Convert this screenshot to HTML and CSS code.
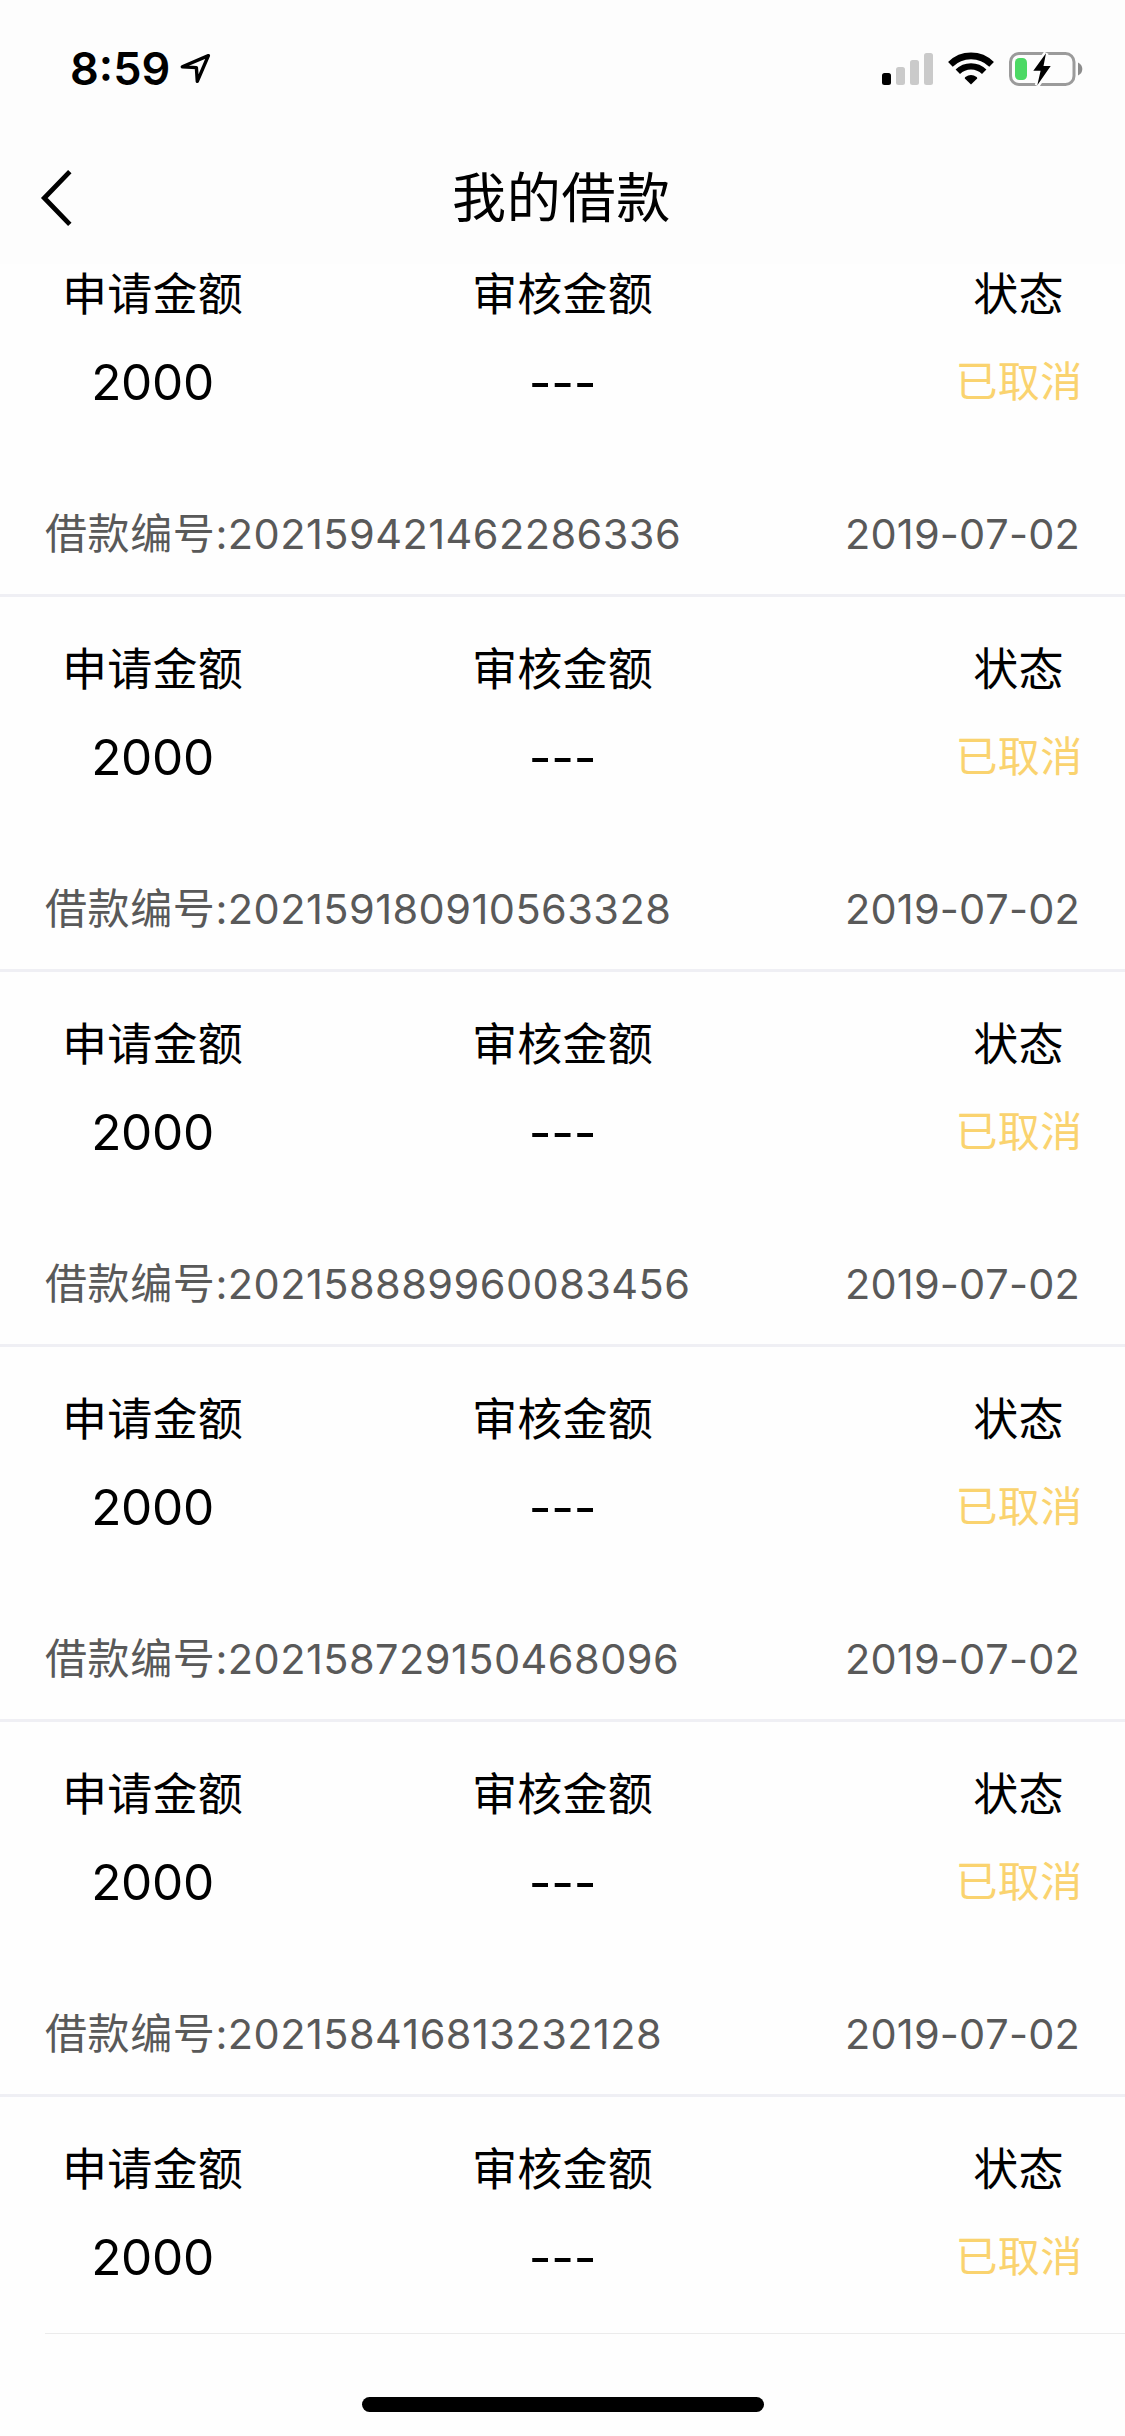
FILE: index.html
```html
<!DOCTYPE html>
<html lang="zh-CN">
<head>
<meta charset="utf-8">
<title>我的借款</title>
<link rel="stylesheet" href="styles.css">
</head>
<body>
<div class="screen">
  <header class="header">
    <div class="status-bar">
      <div class="clock">
        <span class="time">8:59</span>
        <svg class="location" width="34" height="34" viewBox="178 52 34 34"><path d="M208.4 55.6L182.3 66.8L196.4 67.6L197.3 81.4Z" fill="none" stroke="#000" stroke-width="3.4" stroke-linejoin="round"/></svg>
      </div>
      <svg class="indicators" width="204" height="40" viewBox="880 49 204 40">
        <rect x="882" y="73" width="9" height="12" rx="2.5"/>
        <g fill="#cacaca"><rect x="896" y="67" width="9" height="18" rx="2.5"/><rect x="910" y="60" width="9" height="25" rx="2.5"/><rect x="924" y="53" width="9" height="32" rx="2.5"/></g>
        <g fill="none" stroke="#000"><path d="M950.4 64.4A29.2 29.2 0 0 1 991.6 64.4" stroke-width="6.6"/><path d="M957.8 71.8A18.6 18.6 0 0 1 984.2 71.8" stroke-width="6.2"/></g>
        <path d="M971 84.6L964.8 78.4Q964.6 77.6 965.4 77Q971 73.2 976.6 77Q977.4 77.6 977.2 78.4Z"/>
        <rect x="1010.5" y="53.5" width="63.5" height="31" rx="8.5" fill="none" stroke="#9b9b9b" stroke-width="3"/>
        <path d="M1078 62.5Q1082.3 64.5 1082.3 69Q1082.3 73.5 1078 75.5Z" fill="#8c8c8c"/>
        <rect x="1015" y="58" width="12" height="22" rx="4.5" fill="#4cd964"/>
        <path d="M1046 53.3L1033.3 70.7H1040.6L1037.3 85.3L1050.7 66H1043.5Z" stroke="#fdfdfd" stroke-width="5" paint-order="stroke"/>
      </svg>
    </div>
    <div class="nav">
      <svg class="back" width="34" height="60" viewBox="40 168 34 60"><path d="M69.8 171.7L44.3 198L69.8 224.3" fill="none" stroke="#000" stroke-width="4.8"/></svg>
      <h1 class="title">我的借款</h1>
    </div>
  </header>
  <main class="list">
    <section class="loan loan-first">
      <div class="labels"><span>申请金额</span><span>审核金额</span><span>状态</span></div>
      <div class="values"><span>2000</span><span>---</span><span class="status">已取消</span></div>
      <div class="meta"><span class="number">借款编号<span class="digits">:202159421462286336</span></span><span class="digits date">2019-07-02</span></div>
    </section>
    <section class="loan">
      <div class="labels"><span>申请金额</span><span>审核金额</span><span>状态</span></div>
      <div class="values"><span>2000</span><span>---</span><span class="status">已取消</span></div>
      <div class="meta"><span class="number">借款编号<span class="digits">:202159180910563328</span></span><span class="digits date">2019-07-02</span></div>
    </section>
    <section class="loan">
      <div class="labels"><span>申请金额</span><span>审核金额</span><span>状态</span></div>
      <div class="values"><span>2000</span><span>---</span><span class="status">已取消</span></div>
      <div class="meta"><span class="number">借款编号<span class="digits">:202158889960083456</span></span><span class="digits date">2019-07-02</span></div>
    </section>
    <section class="loan">
      <div class="labels"><span>申请金额</span><span>审核金额</span><span>状态</span></div>
      <div class="values"><span>2000</span><span>---</span><span class="status">已取消</span></div>
      <div class="meta"><span class="number">借款编号<span class="digits">:202158729150468096</span></span><span class="digits date">2019-07-02</span></div>
    </section>
    <section class="loan">
      <div class="labels"><span>申请金额</span><span>审核金额</span><span>状态</span></div>
      <div class="values"><span>2000</span><span>---</span><span class="status">已取消</span></div>
      <div class="meta"><span class="number">借款编号<span class="digits">:202158416813232128</span></span><span class="digits date">2019-07-02</span></div>
    </section>
    <section class="loan loan-last">
      <div class="labels"><span>申请金额</span><span>审核金额</span><span>状态</span></div>
      <div class="values"><span>2000</span><span>---</span><span class="status">已取消</span></div>
    </section>
  </main>
  <footer class="home-area"><div class="home-indicator"></div></footer>
</div>
</body>
</html>
```
FILE: styles.css
```css
* { box-sizing: border-box; }

body {
  margin: 0;
  background: #fefefe;
  color: #000;
  font-family: Inter, "Noto Sans CJK SC", sans-serif;
}

.screen {
  width: 1125px;
  height: 2436px;
  display: flex;
  flex-direction: column;
  overflow: hidden;
}

.header {
  height: 264px;
  flex: none;
  background: #fdfdfd;
}

.status-bar {
  height: 132px;
  padding: 0 41px 0 70px;
  display: flex;
  justify-content: space-between;
  align-items: flex-start;
}

.clock {
  display: flex;
  padding-top: 49px;
}

.time {
  width: 108px;
  font-size: 45px;
  font-weight: 600;
  line-height: 40px;
}

.location { margin-top: 3px; }

.indicators { margin-top: 49px; }

.nav {
  height: 132px;
  padding: 0 40px;
  display: grid;
  grid-template-columns: 34px 1fr 34px;
  align-items: center;
}

.title {
  margin: 0;
  padding: 0 2px 7px 0;
  text-align: center;
  font: 400 54px/80px "Noto Sans CJK SC", sans-serif;
  letter-spacing: 0.8px;
}

.loan {
  height: 375px;
  padding-top: 45px;
  border-bottom: 3px solid #efeff4;
}

.loan-first {
  height: 333px;
  padding-top: 3px;
}

.loan-last {
  height: 237px;
  margin-left: 45px;
  border-bottom: 1px solid #ebebeb;
}

.loan-last > div { margin-left: -45px; }

.labels,
.values {
  display: grid;
  grid-template-columns: 305px 515px 305px;
  text-align: center;
}

.labels > :last-child,
.values > :last-child { padding-left: 92px; }

.labels {
  font: 45px/50px "Noto Sans CJK SC", sans-serif;
  letter-spacing: 0.3px;
}

.values {
  margin-top: 31px;
  height: 64px;
  font-size: 49.5px;
  line-height: 68px;
  letter-spacing: -0.3px;
}

.values > .status {
  padding-left: 93px;
  font: 42px/62px "Noto Sans CJK SC", sans-serif;
  letter-spacing: 0.4px;
  color: #fad36f;
}

.meta {
  margin-top: 89px;
  padding: 0 45px;
  display: flex;
  justify-content: space-between;
  align-items: baseline;
  color: #595959;
  line-height: 60px;
}

.number {
  font-family: "Noto Sans CJK SC", sans-serif;
  font-size: 42px;
  letter-spacing: 0.6px;
}

.digits {
  font-family: Inter, sans-serif;
  font-size: 41.5px;
  font-kerning: none;
  letter-spacing: 0.45px;
}

.date { letter-spacing: 0.15px; }

.home-area {
  flex: 1;
  padding-top: 63px;
}

.home-indicator {
  width: 402px;
  height: 15px;
  margin: 0 auto;
  border-radius: 7.5px;
  background: #000;
}
```
